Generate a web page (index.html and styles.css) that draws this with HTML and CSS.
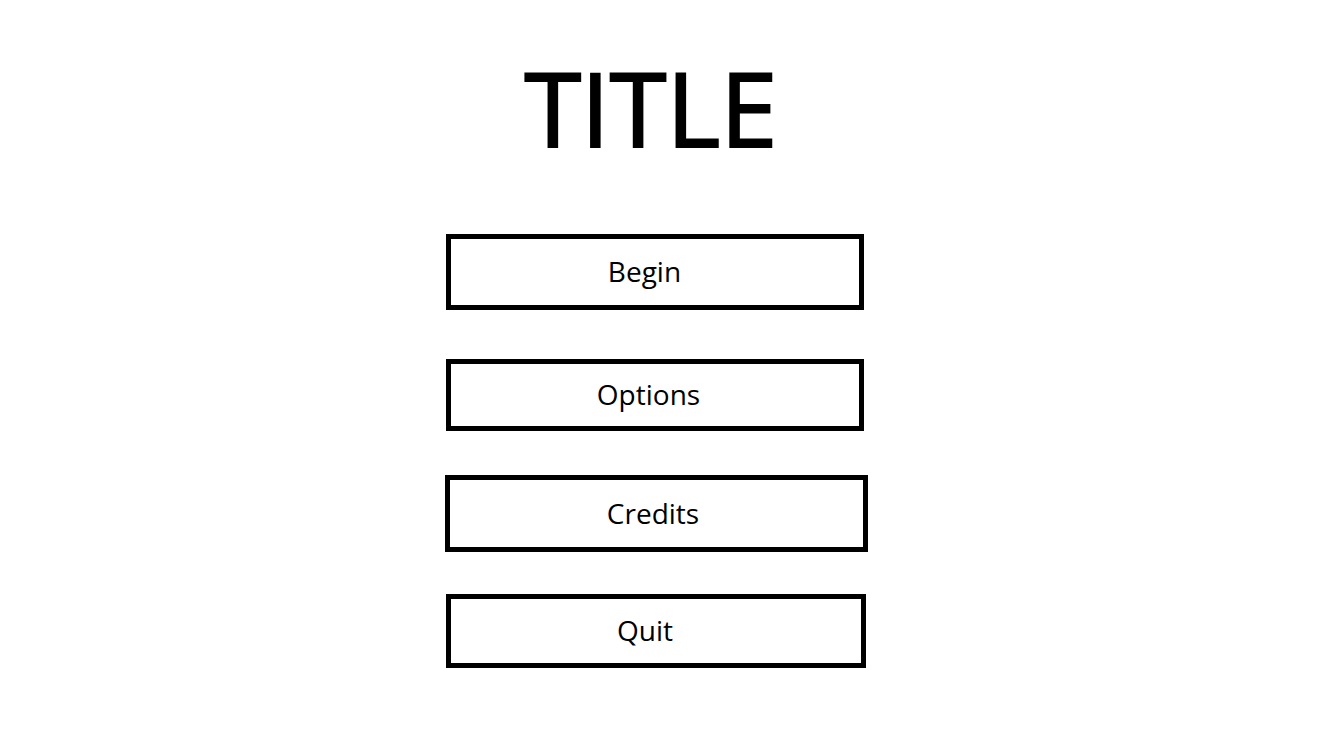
FILE: index.html
```html
<!DOCTYPE html>
<html>
<head>
<meta charset="utf-8">
<link rel="stylesheet" href="styles.css">
</head>
<body>
<main class="menu">
  <h1 class="title">TITLE</h1>
  <nav class="buttons">
    <div class="btn btn-begin">Begin</div>
    <div class="btn btn-options">Options</div>
    <div class="btn btn-credits">Credits</div>
    <div class="btn btn-quit">Quit</div>
  </nav>
</main>
</body>
</html>
```
FILE: styles.css
```css
html, body {
  margin: 0;
  padding: 0;
  background: #fff;
}
body {
  width: 1342px;
  height: 743px;
  overflow: hidden;
  font-family: "Open Sans", "Noto Sans", sans-serif;
  color: #000;
}
.menu {
  display: flex;
  flex-direction: column;
  align-items: flex-start;
  padding-left: 446px;
}
.title {
  margin: 0;
  width: 410px;
  text-align: center;
  font-weight: 400;
  font-size: 103px;
  line-height: 1;
  padding-top: 56px;
  height: 117px;
  -webkit-text-stroke: 2px #000;
  box-sizing: content-box;
}
.buttons {
  display: flex;
  flex-direction: column;
  align-items: flex-start;
  margin-top: 61px;
}
.btn {
  box-sizing: border-box;
  border: 5px solid #000;
  display: flex;
  align-items: center;
  justify-content: center;
  font-size: 28px;
  padding-bottom: 2px;
}
.btn-begin { width: 418px; height: 76px; padding-right: 21px; }
.btn-options { width: 418px; height: 72px; padding-right: 13px; margin-top: 49px; }
.btn-credits { width: 423px; height: 77px; padding-right: 7px; margin-top: 44px; margin-left: -1px; }
.btn-quit { width: 420px; height: 74px; padding-right: 22px; margin-top: 42px; }
```
